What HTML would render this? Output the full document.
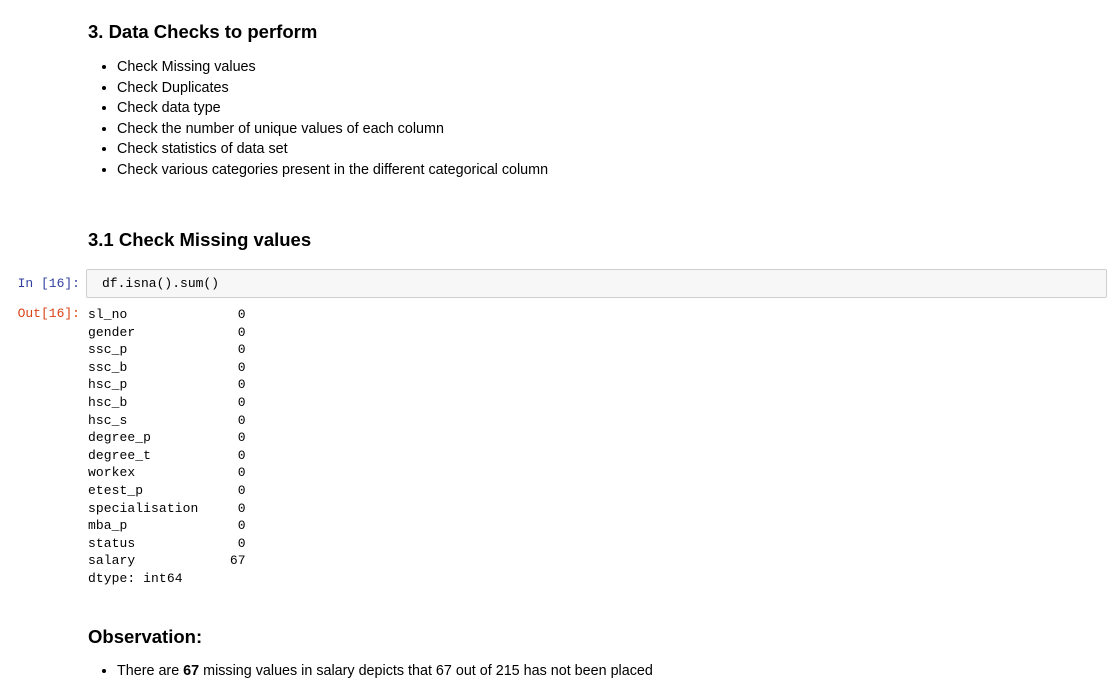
<!DOCTYPE html>
<html><head><style>
body{margin:0;background:#fff;font-family:"Liberation Sans",sans-serif;color:#000;width:1119px;height:698px;overflow:hidden;position:relative}
.h{position:absolute;left:88px;font-weight:bold;font-size:18.5px;margin:0}
ul{position:absolute;left:88px;margin:0;padding-left:29px;font-size:14.35px;line-height:20.5px}
.p{position:absolute;left:0;width:80px;text-align:right;font-family:"Liberation Mono",monospace;font-size:13px}
.in{position:absolute;left:86px;top:269px;width:1021px;height:29px;background:#f7f7f7;border:1px solid #cfcfcf;border-radius:2px;box-sizing:border-box}
pre{margin:0;font-family:"Liberation Mono",monospace;font-size:13px}
</style></head><body>
<div class="h" style="top:21px">3. Data Checks to perform</div>
<ul style="top:57px">
<li>Check Missing values</li>
<li>Check Duplicates</li>
<li>Check data type</li>
<li>Check the number of unique values of each column</li>
<li>Check statistics of data set</li>
<li>Check various categories present in the different categorical column</li>
</ul>
<div class="h" style="top:229px">3.1 Check Missing values</div>
<div class="p" style="top:276px;color:#303f9f">In&nbsp;[16]:</div>
<div class="in"><pre style="position:absolute;left:15px;top:6px">df.isna().sum()</pre></div>
<div class="p" style="top:306px;color:#d84315">Out[16]:</div>
<pre style="position:absolute;left:88px;top:306px;line-height:17.6px;letter-spacing:0.08px">sl_no              0
gender             0
ssc_p              0
ssc_b              0
hsc_p              0
hsc_b              0
hsc_s              0
degree_p           0
degree_t           0
workex             0
etest_p            0
specialisation     0
mba_p              0
status             0
salary            67
dtype: int64</pre>
<div class="h" style="top:626px">Observation:</div>
<ul style="top:661px"><li>There are <b>67</b> missing values in salary depicts that 67 out of 215 has not been placed</li></ul>
</body></html>
